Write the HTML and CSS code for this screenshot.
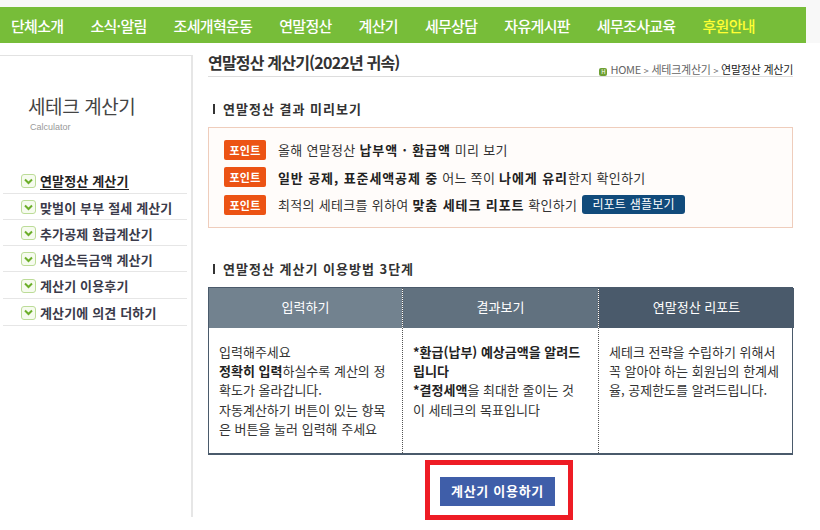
FILE: index.html
```html
<!DOCTYPE html>
<html lang="ko">
<head>
    <meta charset="UTF-8">
    <title>연말정산 계산기</title>
    <link rel="stylesheet" href="styles.css">
</head>
<body>
    <div class="nav">
        <a>단체소개</a>
        <a>소식·알림</a>
        <a>조세개혁운동</a>
        <a>연말정산</a>
        <a>계산기</a>
        <a>세무상담</a>
        <a>자유게시판</a>
        <a>세무조사교육</a>
        <a class="nav-support">후원안내</a>
    </div>

    <div class="page">
        <div class="sidebar">
            <div class="side-title">세테크 계산기</div>
            <div class="side-sub">Calculator</div>
            <ul class="side-menu">
                <li><span class="check"><svg width="9" height="7" viewBox="0 0 9 7"><path d="M1 1.5l3.5 3.5L8 1.5" fill="none" stroke="#6cae2a" stroke-width="2"/></svg></span><span class="current">연말정산 계산기</span></li>
                <li><span class="check"><svg width="9" height="7" viewBox="0 0 9 7"><path d="M1 1.5l3.5 3.5L8 1.5" fill="none" stroke="#6cae2a" stroke-width="2"/></svg></span>맞벌이 부부 절세 계산기</li>
                <li><span class="check"><svg width="9" height="7" viewBox="0 0 9 7"><path d="M1 1.5l3.5 3.5L8 1.5" fill="none" stroke="#6cae2a" stroke-width="2"/></svg></span>추가공제 환급계산기</li>
                <li><span class="check"><svg width="9" height="7" viewBox="0 0 9 7"><path d="M1 1.5l3.5 3.5L8 1.5" fill="none" stroke="#6cae2a" stroke-width="2"/></svg></span>사업소득금액 계산기</li>
                <li><span class="check"><svg width="9" height="7" viewBox="0 0 9 7"><path d="M1 1.5l3.5 3.5L8 1.5" fill="none" stroke="#6cae2a" stroke-width="2"/></svg></span>계산기 이용후기</li>
                <li><span class="check"><svg width="9" height="7" viewBox="0 0 9 7"><path d="M1 1.5l3.5 3.5L8 1.5" fill="none" stroke="#6cae2a" stroke-width="2"/></svg></span>계산기에 의견 더하기</li>
            </ul>
        </div>

        <div class="main">
            <div class="title-row">
                <h1>연말정산 계산기(2022년 귀속)</h1>
                <div class="crumb">
                    <span class="home-icon">H</span>HOME <span class="sep">&gt;</span> 세테크계산기 <span class="sep">&gt;</span> <b>연말정산 계산기</b>
                </div>
            </div>

            <h2 class="section-head first">연말정산 결과 미리보기</h2>
            <div class="point-box">
                <div class="point-row"><span class="point">포인트</span><span>올해 연말정산 <b>납부액 · 환급액</b> 미리 보기</span></div>
                <div class="point-row"><span class="point">포인트</span><span><b>일반 공제, 표준세액공제 중</b> 어느 쪽이 <b>나에게 유리</b>한지 확인하기</span></div>
                <div class="point-row"><span class="point">포인트</span><span>최적의 세테크를 위하여 <b>맞춤 세테크 리포트</b> 확인하기</span><a class="sample">리포트 샘플보기</a></div>
            </div>

            <h2 class="section-head second">연말정산 계산기 이용방법 3단계</h2>
            <div class="steps">
                <div class="step">
                    <div class="step-head head-a">입력하기</div>
                    <div class="step-body">입력해주세요<br><b>정확히 입력</b>하실수록 계산의 정확도가 올라갑니다.<br>자동계산하기 버튼이 있는 항목은 버튼을 눌러 입력해 주세요</div>
                </div>
                <div class="step">
                    <div class="step-head head-b">결과보기</div>
                    <div class="step-body"><b>*환급(납부) 예상금액을 알려드립니다</b><br><b>*결정세액</b>을 최대한 줄이는 것이 세테크의 목표입니다</div>
                </div>
                <div class="step">
                    <div class="step-head head-c">연말정산 리포트</div>
                    <div class="step-body">세테크 전략을 수립하기 위해서 꼭 알아야 하는 회원님의 한계세율, 공제한도를 알려드립니다.</div>
                </div>
            </div>

            <div class="cta-wrap">
                <div class="cta-mark"><a class="cta">계산기 이용하기</a></div>
            </div>
        </div>
    </div>
</body>
</html>
```

FILE: styles.css
```css
* {
    margin: 0;
    padding: 0;
    box-sizing: border-box;
}

body {
    font-family: "Noto Sans CJK KR", "Liberation Sans", sans-serif;
    font-size: 13px;
    color: #333;
    height: 530px;
    overflow: hidden;
    padding-top: 7px;
    background: linear-gradient(#f8f8f8 0, #f8f8f8 43px, #fff 43px);
}

.nav {
    display: flex;
    align-items: center;
    width: 806px;
    height: 36px;
    padding-left: 11px;
    background: #77bd39;
    color: #fff;
    font-size: 15px;
    font-weight: 500;
    letter-spacing: -0.7px;
    gap: 27px;
}

.nav-support {
    color: #ffff33;
}

.page {
    display: flex;
    margin-top: 12px;
}

.sidebar {
    width: 193px;
    height: 462px;
    border-top: 1px solid #e2e2e2;
    border-right: 2px solid #e6e6e6;
}

.side-title {
    margin: 38px 0 0 28px;
    font-size: 19px;
    line-height: 24px;
    color: #444;
    letter-spacing: -0.4px;
}

.side-sub {
    margin: 3px 0 0 30px;
    font-size: 9px;
    line-height: 12px;
    color: #999;
    font-family: "Liberation Sans", sans-serif;
}

.side-menu {
    list-style: none;
    margin: 35px 0 0 3px;
    width: 184px;
}

.side-menu li {
    display: flex;
    align-items: center;
    height: 26px;
    padding: 1px 0 0 18px;
    border-bottom: 1px solid #e6e6e6;
    font-size: 13px;
    font-weight: 700;
    color: #3a3a4a;
    letter-spacing: 0.15px;
}

.side-menu li:nth-child(n+5) {
    height: 27px;
}

.check {
    display: flex;
    align-items: center;
    justify-content: center;
    width: 15px;
    height: 14px;
    margin-right: 4px;
    border: 1px solid #bcdc98;
    border-radius: 3px;
    background: #f6fbef;
}

.current {
    color: #222;
    border-bottom: 1px solid #222;
    line-height: 16px;
}

.main {
    width: 585px;
    margin-left: 15px;
}

.title-row {
    display: flex;
    justify-content: space-between;
    align-items: flex-end;
    height: 22px;
    border-bottom: 1px solid #ddd;
}

.title-row h1 {
    font-size: 16px;
    line-height: 15px;
    font-weight: 700;
    color: #333;
    letter-spacing: -0.8px;
    align-self: flex-start;
}

.crumb {
    font-size: 11px;
    line-height: 9px;
    color: #666;
    letter-spacing: -0.25px;
}

.crumb b {
    font-weight: 400;
    color: #222;
}

.sep {
    font-size: 9px;
}

.home-icon {
    display: inline-block;
    width: 8px;
    height: 8px;
    margin-right: 3px;
    border-radius: 2px;
    background: #6d9f33;
    color: #fff;
    font-size: 6px;
    line-height: 8px;
    text-align: center;
    vertical-align: 0;
}

.section-head {
    padding-left: 15px;
    font-size: 13px;
    line-height: 16px;
    font-weight: 700;
    color: #333;
    letter-spacing: 1px;
    background: linear-gradient(#333, #333) no-repeat 5px 3px / 2px 10px;
}

.section-head.first {
    margin-top: 24px;
}

.section-head.second {
    margin-top: 33px;
}

.point-box {
    height: 101px;
    margin-top: 10px;
    padding: 8px 15px 0;
    border: 1px solid #efcdbc;
    background: #fffcfa;
}

.point-row {
    display: flex;
    align-items: center;
    height: 27.5px;
    color: #333;
    letter-spacing: 0.3px;
}

.point-row b {
    font-weight: 700;
    color: #222;
    letter-spacing: 0.9px;
}

.point {
    width: 42px;
    height: 20px;
    margin-right: 12px;
    border-radius: 2px;
    background: #ec5314;
    color: #fff;
    font-size: 11px;
    font-weight: 700;
    line-height: 20px;
    letter-spacing: 0.2px;
    text-align: center;
}

.sample {
    height: 19px;
    margin-left: 5px;
    padding: 0 10px;
    border-radius: 3px;
    background: #114b7b;
    color: #fff;
    font-size: 12px;
    line-height: 18px;
    letter-spacing: 0.2px;
}

.steps {
    display: grid;
    grid-template-columns: 193px 196px 196px;
    height: 168px;
    margin-top: 10px;
    border: 1px solid #4a5a6b;
    border-width: 1px 1px 2px;
}

.step + .step {
    border-left: 1px dotted #555;
}

.step-head {
    height: 40px;
    color: #fff;
    line-height: 38px;
    text-align: center;
}

.head-a {
    background: #72828f;
}

.head-b {
    background: #61717f;
}

.head-c {
    background: #4a5a6b;
}

.step-body {
    padding: 14px 10px 0;
    line-height: 19.2px;
    color: #333;
    word-break: break-all;
}

.step:nth-child(2) .step-body {
    padding-right: 14px;
}

.step-body b {
    color: #222;
}

.cta-wrap {
    margin-top: 5px;
    padding-left: 217px;
}

.cta-mark {
    width: 148px;
    height: 60px;
    padding: 12px 10px 0;
    border: 5px solid #ee1c25;
}

.cta {
    display: block;
    width: 115px;
    height: 29px;
    background: #3f5ea9;
    color: #fff;
    font-weight: 700;
    line-height: 28px;
    text-align: center;
    letter-spacing: 0.7px;
}
```
